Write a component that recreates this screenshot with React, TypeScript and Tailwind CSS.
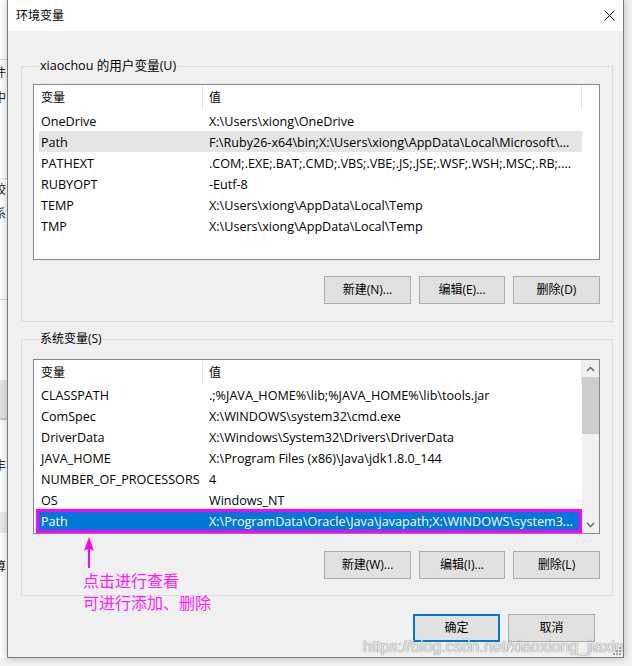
import React from "react";

type Row = [string, string];

const userVars: Row[] = [
  ["OneDrive", String.raw`X:\Users\xiong\OneDrive`],
  ["Path", String.raw`F:\Ruby26-x64\bin;X:\Users\xiong\AppData\Local\Microsoft\...`],
  ["PATHEXT", ".COM;.EXE;.BAT;.CMD;.VBS;.VBE;.JS;.JSE;.WSF;.WSH;.MSC;.RB;...."],
  ["RUBYOPT", "-Eutf-8"],
  ["TEMP", String.raw`X:\Users\xiong\AppData\Local\Temp`],
  ["TMP", String.raw`X:\Users\xiong\AppData\Local\Temp`],
];

const sysVars: Row[] = [
  ["CLASSPATH", String.raw`.;%JAVA_HOME%\lib;%JAVA_HOME%\lib\tools.jar`],
  ["ComSpec", String.raw`X:\WINDOWS\system32\cmd.exe`],
  ["DriverData", String.raw`X:\Windows\System32\Drivers\DriverData`],
  ["JAVA_HOME", String.raw`X:\Program Files (x86)\Java\jdk1.8.0_144`],
  ["NUMBER_OF_PROCESSORS", "4"],
  ["OS", "Windows_NT"],
  ["Path", String.raw`X:\ProgramData\Oracle\Java\javapath;X:\WINDOWS\system3...`],
];

function Header({ h }: { h: string }) {
  return (
    <div className={`flex ml-[5px] w-[543px] shrink-0 ${h}`}>
      <div className="w-[164px] shrink-0 pl-[2px] mt-[1px] border-r border-[#e5e5e5] flex items-center">变量</div>
      <div className="flex-1 pl-[6px] mt-[1px] border-r border-[#e5e5e5] flex items-center">值</div>
    </div>
  );
}

function VarRow({ name, value, state }: { name: string; value: string; state?: "hover" | "sel" }) {
  const bg = state === "hover" ? "bg-[#e5e5e5]" : state === "sel" ? "bg-[#0078d7] text-white" : "";
  return (
    <div className={`relative flex items-center h-[21px] pt-[3px] ml-[5px] w-[543px] shrink-0 text-[12.6px] ${bg}`}>
      <div className="w-[170px] shrink-0 pl-[2px] whitespace-nowrap overflow-hidden">{name}</div>
      <div className="flex-1 whitespace-nowrap overflow-hidden">{value}</div>
      {state === "sel" && (
        <span className="absolute -left-[3px] -top-[1px] right-0 -bottom-[2px] border-[3px] border-[#ff00ff]" />
      )}
    </div>
  );
}

function Btn({ label, w, primary }: { label: string; w: string; primary?: boolean }) {
  return (
    <div
      className={`h-[28px] ${w} flex items-center justify-center bg-[#e1e1e1] ${
        primary ? "border-2 border-[#0078d7]" : "border border-[#adadad]"
      }`}
    >
      {label}
    </div>
  );
}

function Chevron({ up }: { up?: boolean }) {
  return (
    <svg width="9" height="6" viewBox="0 0 9 6">
      {up ? (
        <path d="M1 5 L4.5 1.5 L8 5" fill="none" stroke="#606060" strokeWidth="1.3" />
      ) : (
        <path d="M1 1 L4.5 4.5 L8 1" fill="none" stroke="#606060" strokeWidth="1.3" />
      )}
    </svg>
  );
}

function BgChar({ ch, h }: { ch: string; h: string }) {
  return (
    <div className={`${h} flex items-center overflow-hidden`}>
      <span className="-ml-[6px] text-[12px] text-[#222] whitespace-nowrap">{ch}</span>
    </div>
  );
}

export default function App() {
  return (
    <div className="w-[632px] h-[666px] overflow-hidden bg-[#f2f2f2] flex flex-col text-[12px] text-black font-['Segoe_UI','Open_Sans','Noto_Sans_CJK_SC',sans-serif]">
      <div className="flex h-[658px] shrink-0">
        {/* background window strip */}
        <div className="w-[7px] shrink-0 bg-white flex flex-col overflow-hidden">
          <div className="h-[59px] shrink-0" />
          <div className="h-px bg-[#dcdcdc] shrink-0" />
          <BgChar ch="件" h="h-[26px]" />
          <BgChar ch="中" h="h-[24px]" />
          <div className="h-[68px] shrink-0" />
          <div className="h-px bg-[#dcdcdc] shrink-0" />
          <BgChar ch="校" h="h-[22px]" />
          <BgChar ch="系" h="h-[26px]" />
          <div className="h-[72px] shrink-0" />
          <div className="h-px bg-[#dcdcdc] shrink-0" />
          <div className="h-[80px] shrink-0" />
          <div className="h-[38px] shrink-0 bg-[#e6e6e6]" />
          <div className="h-[2px] bg-[#c8c8c8] shrink-0" />
          <BgChar ch="丰" h="h-[92px]" />
          <div className="h-[21px] shrink-0 bg-[#ececec]" />
          <div className="h-[24px] shrink-0" />
          <BgChar ch="算" h="h-[20px]" />
        </div>

        {/* dialog */}
        <div className="relative w-[617px] shrink-0 h-[658px] border-x border-b border-[#7a7a7a] bg-[#f0f0f0] flex flex-col shadow-[0_0_8px_rgba(0,0,0,0.25)]">
          <div className="h-[31px] shrink-0 bg-white flex items-center justify-between pl-[8px] pr-[8px]">
            <span>环境变量</span>
            <svg width="11" height="11" viewBox="0 0 11 11">
              <path d="M0.5 0.5 L10.5 10.5 M10.5 0.5 L0.5 10.5" stroke="#000" strokeWidth="1" />
            </svg>
          </div>

          <div className="flex flex-col pl-[13px] pr-[10px]">
            {/* user vars */}
            <fieldset className="mt-[27px] border border-[#dcdcdc] pl-[11px] pr-[12px] pb-[17px]">
              <legend className="ml-[6px] px-[1px] leading-[16px] text-[12.6px]">xiaochou 的用户变量(U)</legend>
              <div className="mt-[10px] h-[176px] bg-white border border-[#828790] flex flex-col overflow-hidden">
                <Header h="h-[25px]" />
                {userVars.map(([n, v]) => (
                  <VarRow key={n} name={n} value={v} state={n === "Path" ? "hover" : undefined} />
                ))}
              </div>
              <div className="mt-[16px] flex justify-end gap-[8px]">
                <Btn label="新建(N)..." w="w-[87px]" />
                <Btn label="编辑(E)..." w="w-[86px]" />
                <Btn label="删除(D)" w="w-[87px]" />
              </div>
            </fieldset>

            {/* system vars */}
            <fieldset className="mt-[9px] border border-[#dcdcdc] pl-[11px] pr-[12px] pb-[16px]">
              <legend className="ml-[6px] px-[1px] leading-[16px]">系统变量(S)</legend>
              <div className="mt-[12px] h-[175px] bg-white border border-[#828790] flex overflow-hidden">
                <div className="flex-1 flex flex-col overflow-hidden">
                  <Header h="h-[24px]" />
                  {sysVars.map(([n, v]) => (
                    <VarRow key={n} name={n} value={v} state={n === "Path" ? "sel" : undefined} />
                  ))}
                </div>
                <div className="w-[17px] shrink-0 bg-[#f0f0f0] flex flex-col">
                  <div className="h-[17px] flex items-center justify-center">
                    <Chevron up />
                  </div>
                  <div className="h-[57px] bg-[#cdcdcd]" />
                  <div className="flex-1" />
                  <div className="h-[17px] flex items-center justify-center">
                    <Chevron />
                  </div>
                </div>
              </div>
              <div className="mt-[17px] flex justify-end gap-[8px]">
                <Btn label="新建(W)..." w="w-[87px]" />
                <Btn label="编辑(I)..." w="w-[86px]" />
                <Btn label="删除(L)" w="w-[87px]" />
              </div>
            </fieldset>

            <div className="mt-[18px] mr-[18px] flex justify-end gap-[8px]">
              <Btn label="确定" w="w-[87px]" primary />
              <Btn label="取消" w="w-[87px]" />
            </div>
          </div>

          {/* annotation overlay */}
          <div className="absolute left-[75px] top-[537px] flex flex-col items-start">
            <svg width="12" height="32" viewBox="0 0 12 32">
              <path d="M6 0 L11 14 L7 12 L7 31 L5 31 L5 12 L1 14 Z" fill="#ff00ff" />
            </svg>
          </div>
          <div className="absolute left-[75px] top-[569px] text-[16px] leading-[22px] text-[#ff1aff] font-['Noto_Sans_CJK_SC',sans-serif]">
            <div>点击进行查看</div>
            <div>可进行添加、删除</div>
          </div>

          {/* watermark */}
          <div className="absolute left-[355px] top-[638px] text-[16px] leading-[18px] whitespace-nowrap text-white/85 font-['Liberation_Sans',sans-serif] [text-shadow:0_0_1px_rgba(0,0,0,0.45),0_0_1px_rgba(0,0,0,0.35)]">
            https://blog.csdn.net/xiaoxiong_jiaxin
          </div>

          {/* resize grip */}
          <svg className="absolute right-[1px] bottom-[1px]" width="10" height="10" viewBox="0 0 10 10">
            <rect x="7" y="1" width="2" height="2" fill="#a0a0a0" />
            <rect x="4" y="4" width="2" height="2" fill="#a0a0a0" />
            <rect x="7" y="4" width="2" height="2" fill="#a0a0a0" />
            <rect x="1" y="7" width="2" height="2" fill="#a0a0a0" />
            <rect x="4" y="7" width="2" height="2" fill="#a0a0a0" />
            <rect x="7" y="7" width="2" height="2" fill="#a0a0a0" />
          </svg>
        </div>
        <div className="flex-1" />
      </div>
      <div className="flex-1" />
    </div>
  );
}
